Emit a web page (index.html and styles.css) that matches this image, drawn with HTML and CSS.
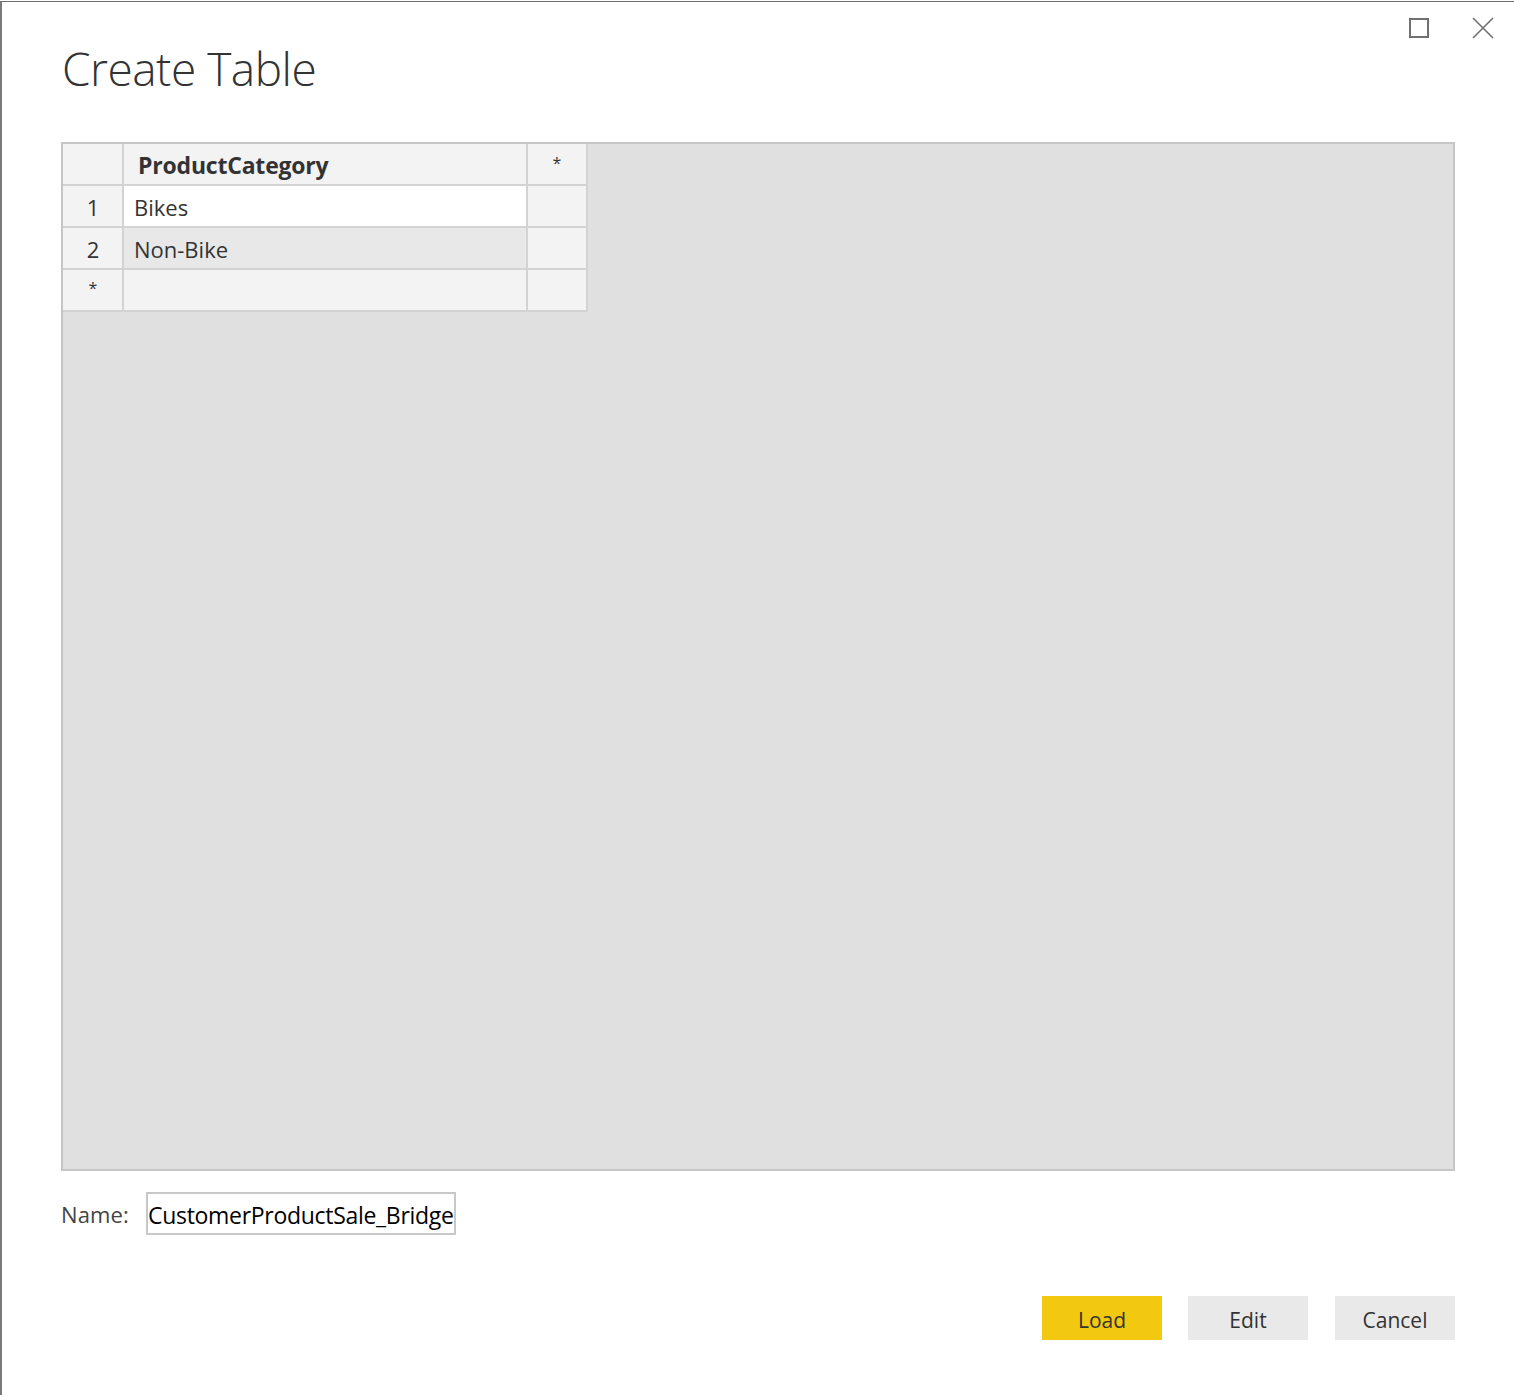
FILE: index.html
```html
<!DOCTYPE html>
<html lang="en">
<head>
<meta charset="utf-8">
<title>Create Table</title>
<link rel="stylesheet" href="styles.css">
</head>
<body>
<div class="dialog">
  <header class="header">
    <h1 class="title">Create Table</h1>
    <div class="controls">
      <button class="ctl ctl-max" aria-label="Maximize">
        <svg width="20" height="20" viewBox="0 0 20 20"><rect x="1" y="1" width="18" height="18" fill="none" stroke="#707070" stroke-width="2"/></svg>
      </button>
      <button class="ctl ctl-close" aria-label="Close">
        <svg width="22" height="22" viewBox="0 0 22 22"><path d="M1 1 L21 21 M21 1 L1 21" stroke="#707070" stroke-width="1.6" fill="none"/></svg>
      </button>
    </div>
  </header>

  <section class="grid-area">
    <div class="table">
      <div class="cell rownum head"></div>
      <div class="cell main head"><span class="colname">ProductCategory</span></div>
      <div class="cell star head">*</div>

      <div class="cell rownum">1</div>
      <div class="cell main white">Bikes</div>
      <div class="cell star"></div>

      <div class="cell rownum">2</div>
      <div class="cell main sel">Non-Bike</div>
      <div class="cell star"></div>

      <div class="cell rownum newrow">*</div>
      <div class="cell main"></div>
      <div class="cell star"></div>
    </div>
  </section>

  <div class="name-row">
    <label class="name-label" for="tname">Name:</label>
    <div class="name-input" id="tname">CustomerProductSale_Bridge</div>
  </div>

  <div class="actions">
    <button class="btn btn-primary">Load</button>
    <button class="btn">Edit</button>
    <button class="btn btn-last">Cancel</button>
  </div>
</div>
</body>
</html>
```

FILE: styles.css
```css
html, body {
  margin: 0;
  padding: 0;
  background: #ffffff;
}

body {
  font-family: "Open Sans", "Noto Sans", "Liberation Sans", sans-serif;
  color: #333333;
  width: 1514px;
  height: 1395px;
  overflow: hidden;
}

.dialog {
  box-sizing: border-box;
  width: 1514px;
  height: 1394px;
  margin-top: 1px;
  border-top: 1px solid #6e6e6e;
  border-left: 2px solid #7a7a7a;
  display: flex;
  flex-direction: column;
}

.header {
  display: flex;
  justify-content: space-between;
  align-items: flex-start;
  height: 140px;
  padding-left: 60px;
}

.title {
  margin: 34px 0 0 0;
  font-size: 46px;
  font-weight: 300;
  line-height: 64px;
  color: #333333;
  letter-spacing: -0.5px;
}

.controls {
  display: flex;
  align-items: flex-start;
  padding-top: 15px;
  padding-right: 20px;
  gap: 43px;
}

.ctl {
  border: 0;
  background: transparent;
  padding: 0;
  margin: 0;
  display: block;
  line-height: 0;
}

.ctl-max {
  margin-top: 1px;
}

.grid-area {
  box-sizing: border-box;
  margin-left: 59px;
  width: 1394px;
  height: 1029px;
  border: 2px solid #c6c6c6;
  background: #e0e0e0;
}

.table {
  display: grid;
  grid-template-columns: 59px 402px 58px;
  grid-auto-rows: 40px;
  gap: 2px;
  padding: 0 2px 2px 0;
  width: fit-content;
  background: #d3d3d3;
}

.cell {
  box-sizing: border-box;
  background: #f3f3f3;
  font-size: 22px;
  line-height: 40px;
  padding-top: 1px;
  color: #333333;
  white-space: nowrap;
  overflow: hidden;
}

.rownum {
  text-align: center;
  padding-left: 1px;
}

.main {
  padding-left: 10px;
}

.main.head {
  padding-left: 14px;
  padding-top: 1px;
}

.colname {
  font-weight: 700;
  font-size: 23px;
  letter-spacing: -0.2px;
}

.star {
  text-align: center;
}

.head.star {
  font-size: 16px;
  line-height: 36px;
}

.newrow {
  font-size: 16px;
  line-height: 36px;
  padding-top: 0;
}

.white {
  background: #ffffff;
}

.sel {
  background: #e8e8e8;
}

.name-row {
  display: flex;
  align-items: center;
  margin-top: 21px;
  margin-left: 59px;
  height: 43px;
}

.name-label {
  font-size: 22px;
  color: #444444;
  width: 85px;
  line-height: 30px;
  margin-top: 0;
  letter-spacing: 0.1px;
}

.name-input {
  box-sizing: border-box;
  height: 43px;
  width: 310px;
  border: 2px solid #c8c8c8;
  font-size: 23px;
  line-height: 39px;
  padding-top: 2px;
  color: #000000;
  padding-left: 0;
  white-space: nowrap;
  overflow: hidden;
  letter-spacing: -0.3px;
}

.actions {
  display: flex;
  justify-content: flex-end;
  gap: 26px;
  margin-top: 61px;
  width: 1453px;
}

.btn {
  width: 120px;
  height: 44px;
  border: 0;
  padding: 4px 0 0 0;
  margin: 0;
  background: #e9e9e9;
  font-family: "Open Sans", "Noto Sans", "Liberation Sans", sans-serif;
  font-size: 21px;
  color: #333333;
}

.btn-last {
  margin-left: 1px;
}

.btn-primary {
  background: #f2c811;
}
```
